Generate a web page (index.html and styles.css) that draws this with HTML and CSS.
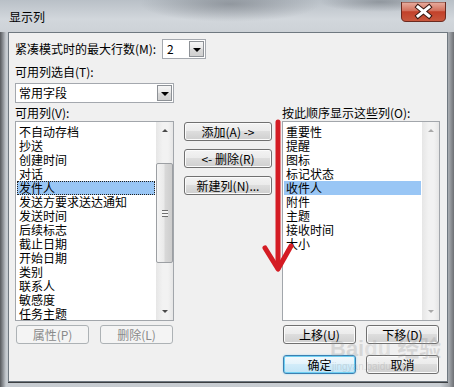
FILE: index.html
```html
<!DOCTYPE html>
<html lang="zh-CN">
<head>
  <meta charset="UTF-8" />
  <title>显示列</title>
  <link rel="stylesheet" href="styles.css">
</head>
<body>

  <div class="window">
    <div class="titlebar">
      <span class="title">显示列</span>
      <span class="close">
        <svg width="45" height="20" viewBox="0 0 45 20">
          <defs>
            <linearGradient id="red" x1="0" y1="0" x2="0" y2="1">
              <stop offset="0" stop-color="#e8b0a2" />
              <stop offset="0.45" stop-color="#d3705c" />
              <stop offset="0.5" stop-color="#c2412a" />
              <stop offset="1" stop-color="#c9593f" />
            </linearGradient>
          </defs>
          <path d="M0.5 0 H44.5 V15 Q44.5 19.5 40 19.5 H5 Q0.5 19.5 0.5 15 Z" fill="url(#red)" stroke="#6a2a20" />
          <path d="M17 5 L28 14 M28 5 L17 14" stroke="#3a1a14" stroke-width="5" stroke-linecap="square" />
          <path d="M17 5 L28 14 M28 5 L17 14" stroke="#ffffff" stroke-width="3" stroke-linecap="square" />
        </svg>
      </span>
    </div>

    <div class="client">
      <div class="row-top">
        <span class="top-label">紧凑模式时的最大行数(M):</span>
        <div class="combo combo-small">
          <span class="value">2</span>
          <span class="drop"><i class="tri"></i></span>
        </div>
      </div>

      <div class="label-line spaced">可用列选自(T):</div>
      <div class="combo combo-wide">
        <span class="value">常用字段</span>
        <span class="drop"><i class="tri"></i></span>
      </div>

      <div class="columns">
        <div class="col">
          <div class="label-line">可用列(V):</div>
          <div class="listbox">
            <ul class="items">
              <li>不自动存档</li>
              <li>抄送</li>
              <li>创建时间</li>
              <li>对话</li>
              <li class="selected focused">发件人</li>
              <li>发送方要求送达通知</li>
              <li>发送时间</li>
              <li>后续标志</li>
              <li>截止日期</li>
              <li>开始日期</li>
              <li>类别</li>
              <li>联系人</li>
              <li>敏感度</li>
              <li>任务主题</li>
            </ul>
            <div class="scrollbar">
              <span class="arrow-btn"><i class="up"></i></span>
              <div class="track">
                <div class="thumb"><span class="grip"></span></div>
              </div>
              <span class="arrow-btn"><i class="down"></i></span>
            </div>
          </div>
          <div class="btn-row">
            <button class="btn" disabled>属性(P)</button>
            <button class="btn" disabled>删除(L)</button>
          </div>
        </div>

        <div class="col mid">
          <button class="btn">添加(A) -&gt;</button>
          <button class="btn">&lt;- 删除(R)</button>
          <button class="btn btn-new">新建列(N)...</button>
        </div>

        <div class="col">
          <div class="label-line">按此顺序显示这些列(O):</div>
          <div class="listbox">
            <ul class="items">
              <li>重要性</li>
              <li>提醒</li>
              <li>图标</li>
              <li>标记状态</li>
              <li class="selected">收件人</li>
              <li>附件</li>
              <li>主题</li>
              <li>接收时间</li>
              <li>大小</li>
            </ul>
            <div class="scrollbar off">
              <span class="arrow-btn"><i class="up"></i></span>
              <div class="track"></div>
              <span class="arrow-btn"><i class="down"></i></span>
            </div>
          </div>
          <div class="btn-row">
            <button class="btn">上移(U)</button>
            <button class="btn">下移(D)</button>
          </div>
          <div class="btn-row ok-row">
            <button class="btn btn-default">确定</button>
            <button class="btn">取消</button>
          </div>
        </div>
      </div>
    </div>

    <!-- red marker drawn over the dialog -->
    <svg class="marker" width="40" height="160" viewBox="0 0 40 160">
      <path d="M20 4 V150" stroke="#d41c24" stroke-width="5" stroke-linecap="round" />
      <path d="M7 130 L20 151 L33 128" stroke="#d41c24" stroke-width="5" fill="none" stroke-linecap="round" stroke-linejoin="round" />
    </svg>

    <div class="watermark">
      <span class="wm-big">Bai<span class="wm-du">du</span> 经验</span>
      <span class="wm-small">jingyan.baidu.com</span>
    </div>
  </div>

</body>
</html>
```

FILE: styles.css
```css
body {
  margin: 0;
  font-family: "Noto Sans CJK SC", "Liberation Sans", sans-serif;
  font-size: 12px;
  color: #000;
}
.window {
  position: relative;
  width: 454px;
  height: 387px;
  display: flex;
  flex-direction: column;
  box-sizing: border-box;
  background: linear-gradient(to right, #56595c 0px, #8c9095 3px, #c6cbd0 6px, #c9ced3 440px, #a4a8ad 449px, #6d7074 454px);
  overflow: hidden;
}
.titlebar {
  height: 32px;
  display: flex;
  align-items: flex-start;
  padding: 0 8px 0 9px;
  background:
    radial-gradient(ellipse 90px 18px at 230px 4px, rgba(90, 96, 104, 0.45), rgba(90, 96, 104, 0)),
    radial-gradient(ellipse 60px 10px at 380px 2px, rgba(80, 86, 94, 0.4), rgba(80, 86, 94, 0)),
    linear-gradient(#b9c0c7, #d2d7dc 60%, #cdd2d7);
}
.title {
  margin-top: 9px;
  font-size: 12px;
  line-height: 16px;
}
.close {
  margin-left: auto;
  margin-top: 2px;
  height: 20px;
}
.client {
  flex: 1;
  margin: 0 6px 5px 8px;
  border: 1px solid #6f7880;
  background: #f0f0f0;
  padding: 6px 6px 0 6px;
  box-shadow: 0 1px 0 #3c3f42;
}
.row-top {
  display: flex;
  align-items: center;
  height: 20px;
}
.top-label {
  width: 147px;
  line-height: 14px;
}
.label-line {
  line-height: 14px;
  height: 14px;
  white-space: nowrap;
}
.spaced {
  margin-top: 6px;
}

/* combo boxes */
.combo {
  display: flex;
  align-items: center;
  box-sizing: border-box;
  height: 20px;
  background: #fff;
  border: 1px solid #a4a8ae;
}
.combo .value {
  flex: 1;
  padding-left: 3px;
  line-height: 16px;
}
.combo .drop {
  width: 15px;
  height: 16px;
  margin-right: 1px;
  box-sizing: border-box;
  border: 1px solid #8d9196;
  background: linear-gradient(#f6f6f6, #e6e6e6 50%, #d9d9d9 51%, #d0d0d0);
  display: flex;
  align-items: center;
  justify-content: center;
}
.tri {
  width: 0;
  height: 0;
  border-left: 4px solid transparent;
  border-right: 4px solid transparent;
  border-top: 4px solid #000;
  margin-top: 2px;
}
.combo-small {
  width: 44px;
}
.combo-small .value {
  padding-left: 4px;
}
.combo-wide {
  width: 159px;
  margin-top: 4px;
}

/* three columns */
.columns {
  display: grid;
  grid-template-columns: 159px 88px 158px;
  column-gap: 10px;
  margin-top: 3px;
}
.col {
  display: flex;
  flex-direction: column;
}
.mid {
  padding-top: 16px;
}
.mid .btn + .btn {
  margin-top: 8px;
}
.mid .btn-new {
  margin-top: 15px;
}

/* list boxes */
.listbox {
  margin-top: 1px;
  height: 200px;
  box-sizing: border-box;
  border: 1px solid #a2a6ab;
  background: #fff;
  display: flex;
}
.items {
  flex: 1;
  list-style: none;
  margin: 0;
  padding: 3px 1px 0 1px;
  overflow: hidden;
}
.items li {
  height: 14px;
  line-height: 14px;
  padding-left: 2px;
  white-space: nowrap;
}
.items li.selected {
  background: #99c6f5;
}
.items li.focused {
  outline: 1px dotted #202020;
  outline-offset: -1px;
}
.scrollbar {
  width: 17px;
  display: flex;
  flex-direction: column;
  background: linear-gradient(to right, #e6e6e6, #f2f2f2 40%, #f2f2f2 70%, #e6e6e6);
}
.arrow-btn {
  height: 17px;
  display: flex;
  align-items: center;
  justify-content: center;
}
.arrow-btn .up {
  width: 0;
  height: 0;
  border-left: 3px solid transparent;
  border-right: 3px solid transparent;
  border-bottom: 3px solid #4a4a4a;
}
.arrow-btn .down {
  width: 0;
  height: 0;
  border-left: 3px solid transparent;
  border-right: 3px solid transparent;
  border-top: 3px solid #4a4a4a;
}
.scrollbar.off .up {
  border-bottom-color: #a9a9a9;
}
.scrollbar.off .down {
  border-top-color: #a9a9a9;
}
.track {
  flex: 1;
}
.thumb {
  margin: 24px 0 0 0;
  height: 100px;
  box-sizing: border-box;
  border: 1px solid #9c9fa3;
  border-radius: 2px;
  background: linear-gradient(to right, #f4f4f4, #eaeaea 45%, #d8d8d8 55%, #cdcdcd);
  display: flex;
  align-items: center;
  justify-content: center;
}
.grip {
  width: 6px;
  height: 5px;
  border-top: 1px solid #6e6e6e;
  border-bottom: 1px solid #6e6e6e;
  background: linear-gradient(#f4f4f4 2px, #6e6e6e 2px, #6e6e6e 3px, #f4f4f4 3px);
}

/* buttons */
.btn {
  height: 19px;
  padding: 0;
  box-sizing: border-box;
  border: 1px solid #707070;
  border-radius: 3px;
  background: linear-gradient(#f3f3f3, #ebebeb 48%, #dddddd 50%, #cfcfcf);
  box-shadow: inset 0 0 0 1px #fbfbfb;
  font-family: "Noto Sans CJK SC", "Liberation Sans", sans-serif;
  font-size: 12px;
  line-height: 16px;
  color: #000;
  white-space: nowrap;
}
.btn:disabled {
  border-color: #adb2b5;
  background: #f4f4f4;
  box-shadow: none;
  color: #8a8a8a;
}
.btn-default {
  border-color: #3c7fb1;
  background: linear-gradient(#f2f9fd, #e4f3fb 48%, #d2ecf9 50%, #c2e4f6);
  box-shadow: inset 0 0 0 1px #6fd0f3, 0 0 2px #9ad7f3;
}
.btn-row {
  display: flex;
  justify-content: space-between;
  margin-top: 4px;
  padding: 0 1px;
}
.btn-row .btn {
  width: 73px;
}
.ok-row {
  margin-top: 11px;
}

/* annotation overlays */
.marker {
  position: absolute;
  left: 258px;
  top: 118px;
}
.watermark {
  position: absolute;
  left: 330px;
  top: 337px;
  display: flex;
  flex-direction: column;
  color: rgba(150, 150, 150, 0.28);
  font-family: "Liberation Sans", "Noto Sans CJK SC", sans-serif;
  pointer-events: none;
}
.wm-big {
  font-size: 22px;
  font-weight: bold;
  line-height: 24px;
}
.wm-du {
  color: rgba(150, 150, 150, 0.2);
}
.wm-small {
  font-size: 10px;
  line-height: 12px;
  padding-left: 2px;
}
```
